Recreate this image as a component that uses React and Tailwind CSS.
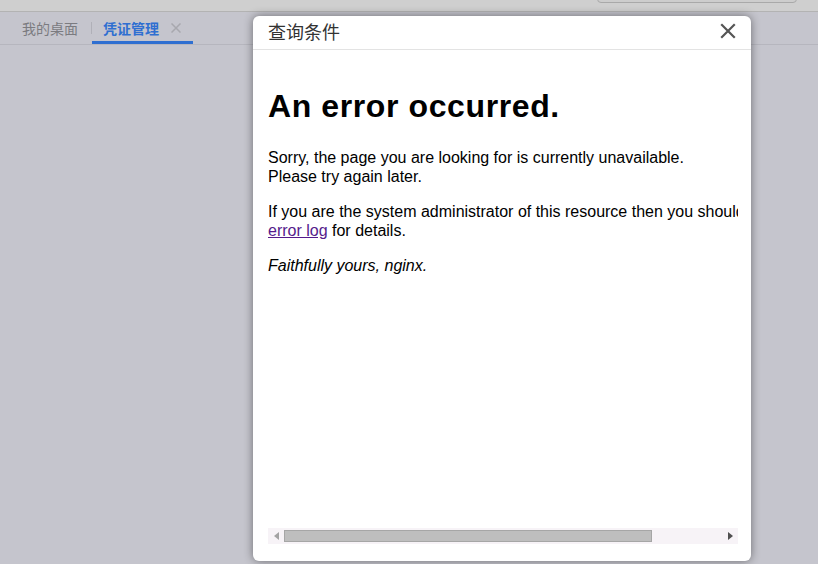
import React from "react";

// Pagina "凭证管理" con finestra modale "查询条件" che mostra l'errore nginx.
const sans = { fontFamily: '"Liberation Sans", Arial, sans-serif' };
const cjk = { fontFamily: '"Noto Sans CJK SC", "Noto Sans", sans-serif' };

function CloseIcon() {
  return (
    <svg width="16" height="16" viewBox="0 0 16 16" className="block">
      <path d="M2 2 L14 14 M14 2 L2 14" stroke="#555" strokeWidth="2.2" strokeLinecap="square" />
    </svg>
  );
}

function HScrollbar() {
  return (
    <div className="flex h-[16px] items-center bg-[#f7f3f7]">
      <div className="flex w-[16px] justify-center">
        <svg width="5" height="8" viewBox="0 0 5 8">
          <path d="M5 0 L0 4 L5 8 Z" fill="#a3a3a3" />
        </svg>
      </div>
      <div className="h-[12px] w-[368px] border border-[#a6a6a6] bg-[#bebebe]" />
      <div className="flex-1" />
      <div className="flex w-[16px] justify-center">
        <svg width="5" height="8" viewBox="0 0 5 8">
          <path d="M0 0 L5 4 L0 8 Z" fill="#505050" />
        </svg>
      </div>
    </div>
  );
}

export default function App() {
  return (
    <div className="relative h-[564px] w-[818px] overflow-hidden bg-[#c5c5cd]" style={cjk}>
      {/* barra superiore (coperta dalla maschera) */}
      <div className="relative h-[12px] border-b border-[#b3b3b3] bg-[#cfcfcf]">
        <div className="absolute right-[21px] top-[-6px] h-[9px] w-[200px] rounded-b-[4px] border border-[#a9a9a9] bg-[#cdcdcd]" />
      </div>

      {/* schede */}
      <div className="flex h-[33px] items-stretch border-b border-[#b6b6be] pl-[22px]">
        <div className="flex items-center pr-[13px] text-[14px] text-[#7b7b80]">我的桌面</div>
        <div className="my-[10px] w-px bg-[#b0b0b8]" />
        <div className="flex items-center gap-[12px] border-b-[3px] border-[#2f6fd1] pl-[11px] pr-[12px] pt-[3px]">
          <span className="text-[14px] font-bold text-[#2f6fd1]">凭证管理</span>
          <svg width="10" height="10" viewBox="0 0 10 10">
            <path d="M0.5 0.5 L9.5 9.5 M9.5 0.5 L0.5 9.5" stroke="#a8a8ae" strokeWidth="1.5" />
          </svg>
        </div>
      </div>

      {/* finestra modale */}
      <div className="absolute left-[253px] top-[16px] flex h-[545px] w-[498px] flex-col rounded-[6px] bg-white shadow-[0_0_10px_rgba(0,0,0,0.45)]">
        <div className="flex h-[34px] items-center justify-between border-b border-[#e3e3e3] pb-[3px] pl-[15px] pr-[15px]">
          <span className="text-[18px] leading-none text-[#333]">查询条件</span>
          <CloseIcon />
        </div>

        <div className="flex flex-1 flex-col pl-[15px] pr-[13px] pb-[17px]">
          <div className="flex-1 overflow-hidden" style={sans}>
            <div className="w-[560px] text-[16px] text-black">
              <h1 className="mb-[23px] mt-[38px] text-[32px] font-bold leading-[37px] tracking-[0.6px]">An error occurred.</h1>
              <p className="mb-[16px] leading-[19px]">
                Sorry, the page you are looking for is currently unavailable.
                <br />
                Please try again later.
              </p>
              <p className="mb-[16px] leading-[19px]">
                If you are the system administrator of this resource then you should check the{" "}
                <a className="text-[#551a8b] underline">error log</a> for details.
              </p>
              <p className="italic leading-[19px]">Faithfully yours, nginx.</p>
            </div>
          </div>
          <HScrollbar />
        </div>
      </div>
    </div>
  );
}
